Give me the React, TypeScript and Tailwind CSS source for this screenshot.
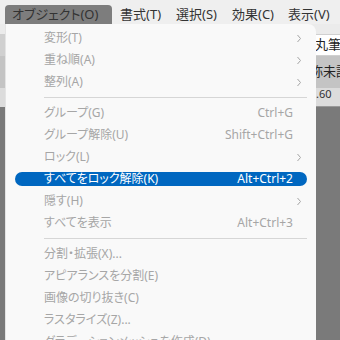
import React from 'react';

type Item =
  | { sep: true }
  | { sep?: false; label: string; shortcut?: string; sub?: boolean; active?: boolean };

const items: Item[] = [
  { label: '変形(T)', sub: true },
  { label: '重ね順(A)', sub: true },
  { label: '整列(A)', sub: true },
  { sep: true },
  { label: 'グループ(G)', shortcut: 'Ctrl+G' },
  { label: 'グループ解除(U)', shortcut: 'Shift+Ctrl+G' },
  { label: 'ロック(L)', sub: true },
  { label: 'すべてをロック解除(K)', shortcut: 'Alt+Ctrl+2', active: true },
  { label: '隠す(H)', sub: true },
  { label: 'すべてを表示', shortcut: 'Alt+Ctrl+3' },
  { sep: true },
  { label: '分割・拡張(X)...' },
  { label: 'アピアランスを分割(E)' },
  { label: '画像の切り抜き(C)' },
  { label: 'ラスタライズ(Z)...' },
  { label: 'グラデーションメッシュを作成(D)...' },
];

function Chevron() {
  return (
    <svg width="6" height="9" viewBox="0 0 6 9" className="mr-[-9px] ml-auto">
      <polyline points="1.5,1 4.5,4.5 1.5,8" fill="none" stroke="#a6a6a6" strokeWidth="1" />
    </svg>
  );
}

function Row({ item }: { item: Item }) {
  if (item.sep) {
    return (
      <div className="h-[9px] flex items-center pl-[38px] pr-[9px]">
        <div className="h-px w-full bg-[#d6d6d6]" />
      </div>
    );
  }
  return (
    <div className="h-[22px] flex items-center px-[9px]">
      <div
        className={`h-[14px] w-full rounded-full flex items-center pl-[29px] pr-[14px] whitespace-nowrap ${
          item.active ? 'bg-[#0067c0] text-white' : 'text-[#a6a6a6]'
        }`}
      >
        <span>{item.label}</span>
        {item.shortcut && <span className="ml-auto">{item.shortcut}</span>}
        {item.sub && <Chevron />}
      </div>
    </div>
  );
}

export default function App() {
  const menus = ['書式(T)', '選択(S)', '効果(C)', '表示(V)'];
  return (
    <div className="w-[340px] h-[340px] relative overflow-hidden bg-[#7a7a7a] text-[13px] [font-feature-settings:'palt'] font-['Noto_Sans','Noto_Sans_CJK_JP',sans-serif]">
      {/* menu bar */}
      <div className="h-[24px] bg-[#efefef] flex items-end pl-[5px] text-[#333]">
        <div className="h-[19px] w-[107px] bg-[#7d7d7d] rounded-t-[4px] flex items-center pl-[7px] whitespace-nowrap">
          オブジェクト(O)
        </div>
        <div className="flex h-[19px] items-center">
          {menus.map(m => (
            <span key={m} className="ml-[8px] mr-[5px] w-[43px] whitespace-nowrap">{m}</span>
          ))}
        </div>
      </div>

      {/* app behind */}
      <div className="h-[10px] bg-[#ebebeb]" />
      <div className="h-[22px] bg-[#d0d0d0] flex justify-end items-center">
        <div className="h-[20px] w-[26px] bg-white flex items-center pl-[1px] text-[#222] whitespace-nowrap overflow-hidden">丸筆</div>
      </div>
      <div className="h-[32px] bg-[#c4c4c4] flex justify-end items-center">
        <div className="w-[30px] text-[#222] whitespace-nowrap overflow-hidden">称未記</div>
      </div>
      <div className="h-[19px] bg-[#dcdcdc] flex justify-end">
        <div className="w-[26px] text-[11px] text-[#333] leading-[12px] pl-[2px] border-b border-[#999]">.60</div>
      </div>

      {/* dropdown */}
      <div className="absolute left-[5px] top-[24px] w-[311px] h-[330px] bg-[#f9f9f9] rounded-tr-[8px] border-l border-[#e4e4e4] pt-[3px] text-[12px]">
        {items.map((it, i) => (
          <Row key={i} item={it} />
        ))}
      </div>
    </div>
  );
}
